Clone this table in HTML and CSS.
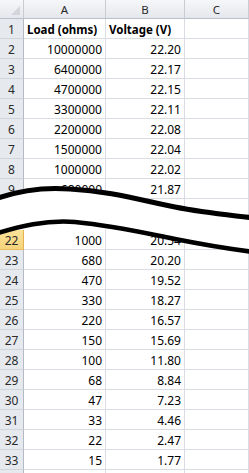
FILE: index.html
```html
<!DOCTYPE html>
<html>
<head>
<meta charset="utf-8">
<link rel="stylesheet" href="styles.css">
</head>
<body>
<div class="wrap">
  <div class="sheet">
    <div class="corner"><span class="tri"></span></div>
    <div class="colhead">A</div>
    <div class="colhead">B</div>
    <div class="colhead">C</div>

    <div class="rowhead">1</div><div class="cell bold">Load (ohms)</div><div class="cell bold">Voltage (V)</div><div class="cell"></div>
    <div class="rowhead">2</div><div class="cell num">10000000</div><div class="cell num">22.20</div><div class="cell"></div>
    <div class="rowhead">3</div><div class="cell num">6400000</div><div class="cell num">22.17</div><div class="cell"></div>
    <div class="rowhead">4</div><div class="cell num">4700000</div><div class="cell num">22.15</div><div class="cell"></div>
    <div class="rowhead">5</div><div class="cell num">3300000</div><div class="cell num">22.11</div><div class="cell"></div>
    <div class="rowhead">6</div><div class="cell num">2200000</div><div class="cell num">22.08</div><div class="cell"></div>
    <div class="rowhead">7</div><div class="cell num">1500000</div><div class="cell num">22.04</div><div class="cell"></div>
    <div class="rowhead">8</div><div class="cell num">1000000</div><div class="cell num">22.02</div><div class="cell"></div>
    <div class="rowhead">9</div><div class="cell num">680000</div><div class="cell num">21.87</div><div class="cell"></div>
    <div class="rowhead">10</div><div class="cell"></div><div class="cell"></div><div class="cell"></div>

    <div class="gap"></div>

    <div class="rowhead sel">22</div><div class="cell num">1000</div><div class="cell num">20.54</div><div class="cell"></div>
    <div class="rowhead">23</div><div class="cell num">680</div><div class="cell num">20.20</div><div class="cell"></div>
    <div class="rowhead">24</div><div class="cell num">470</div><div class="cell num">19.52</div><div class="cell"></div>
    <div class="rowhead">25</div><div class="cell num">330</div><div class="cell num">18.27</div><div class="cell"></div>
    <div class="rowhead">26</div><div class="cell num">220</div><div class="cell num">16.57</div><div class="cell"></div>
    <div class="rowhead">27</div><div class="cell num">150</div><div class="cell num">15.69</div><div class="cell"></div>
    <div class="rowhead">28</div><div class="cell num">100</div><div class="cell num">11.80</div><div class="cell"></div>
    <div class="rowhead">29</div><div class="cell num">68</div><div class="cell num">8.84</div><div class="cell"></div>
    <div class="rowhead">30</div><div class="cell num">47</div><div class="cell num">7.23</div><div class="cell"></div>
    <div class="rowhead">31</div><div class="cell num">33</div><div class="cell num">4.46</div><div class="cell"></div>
    <div class="rowhead">32</div><div class="cell num">22</div><div class="cell num">2.47</div><div class="cell"></div>
    <div class="rowhead">33</div><div class="cell num">15</div><div class="cell num">1.77</div><div class="cell"></div>
    <div class="rowhead"></div><div class="cell"></div><div class="cell"></div><div class="cell"></div>
  </div>

  <svg class="tear" width="249" height="473" viewBox="0 0 249 473">
    <path d="M-5 199 C 20 190, 45 187, 70 189 C 110 191, 140 200, 175 207 C 205 213, 230 215, 254 218 L 254 252 C 230 249, 205 245, 175 239 C 140 232, 115 226, 75 222 C 45 220, 20 226, -5 234 Z" fill="#fff"/>
    <path d="M-5 199 C 20 190, 45 187, 70 189 C 110 191, 140 200, 175 207 C 205 213, 230 215, 254 218" fill="none" stroke="#000" stroke-width="5"/>
    <path d="M-5 234 C 20 226, 45 220, 75 222 C 115 226, 140 232, 175 239 C 205 245, 230 249, 254 252" fill="none" stroke="#000" stroke-width="4.5"/>
  </svg>
</div>
</body>
</html>
```

FILE: styles.css
```css
html, body {
  margin: 0;
  padding: 0;
  background: #fff;
  overflow: hidden;
}

.wrap {
  position: relative;
  width: 249px;
  height: 473px;
  overflow: hidden;
}

.sheet {
  display: grid;
  grid-template-columns: 24px 82px 79px 64px;
  font-family: "Noto Sans", "Open Sans", sans-serif;
  font-size: 12px;
  color: #000;
}

.corner,
.colhead {
  height: 19px;
  box-sizing: border-box;
  background: linear-gradient(#f6f7f9, #e4e7ec);
  border-right: 1px solid #c8cdd4;
  border-bottom: 1px solid #b9bfc8;
}

.corner {
  position: relative;
}

.tri {
  position: absolute;
  right: 3px;
  bottom: 3px;
  width: 0;
  height: 0;
  border-left: 9px solid transparent;
  border-bottom: 9px solid #d2d6dc;
}

.colhead {
  display: flex;
  align-items: center;
  justify-content: center;
  color: #2a2a2a;
  font-size: 11.5px;
}

.rowhead {
  height: 20px;
  box-sizing: border-box;
  background: #e6e9ee;
  border-right: 1px solid #b3bac4;
  border-bottom: 1px solid #d0d5dc;
  display: flex;
  align-items: center;
  justify-content: center;
  color: #2a2a2a;
  padding-top: 1px;
}

.rowhead.sel {
  background: linear-gradient(#fbe39b, #f6d37c);
  border-bottom-color: #e8bd5c;
  border-right-color: #e2b24e;
}

.cell {
  height: 20px;
  box-sizing: border-box;
  border-right: 1px solid #d9dde3;
  border-bottom: 1px solid #d9dde3;
  display: flex;
  align-items: center;
  padding: 1px 3px 0 3px;
  white-space: nowrap;
  overflow: hidden;
}

.cell.num {
  justify-content: flex-end;
}

.cell.bold {
  font-weight: bold;
  font-size: 11.5px;
  overflow: visible;
}

.gap {
  grid-column: 1 / -1;
  height: 11px;
  background: #fff;
}

.tear {
  position: absolute;
  left: 0;
  top: 0;
}
```
